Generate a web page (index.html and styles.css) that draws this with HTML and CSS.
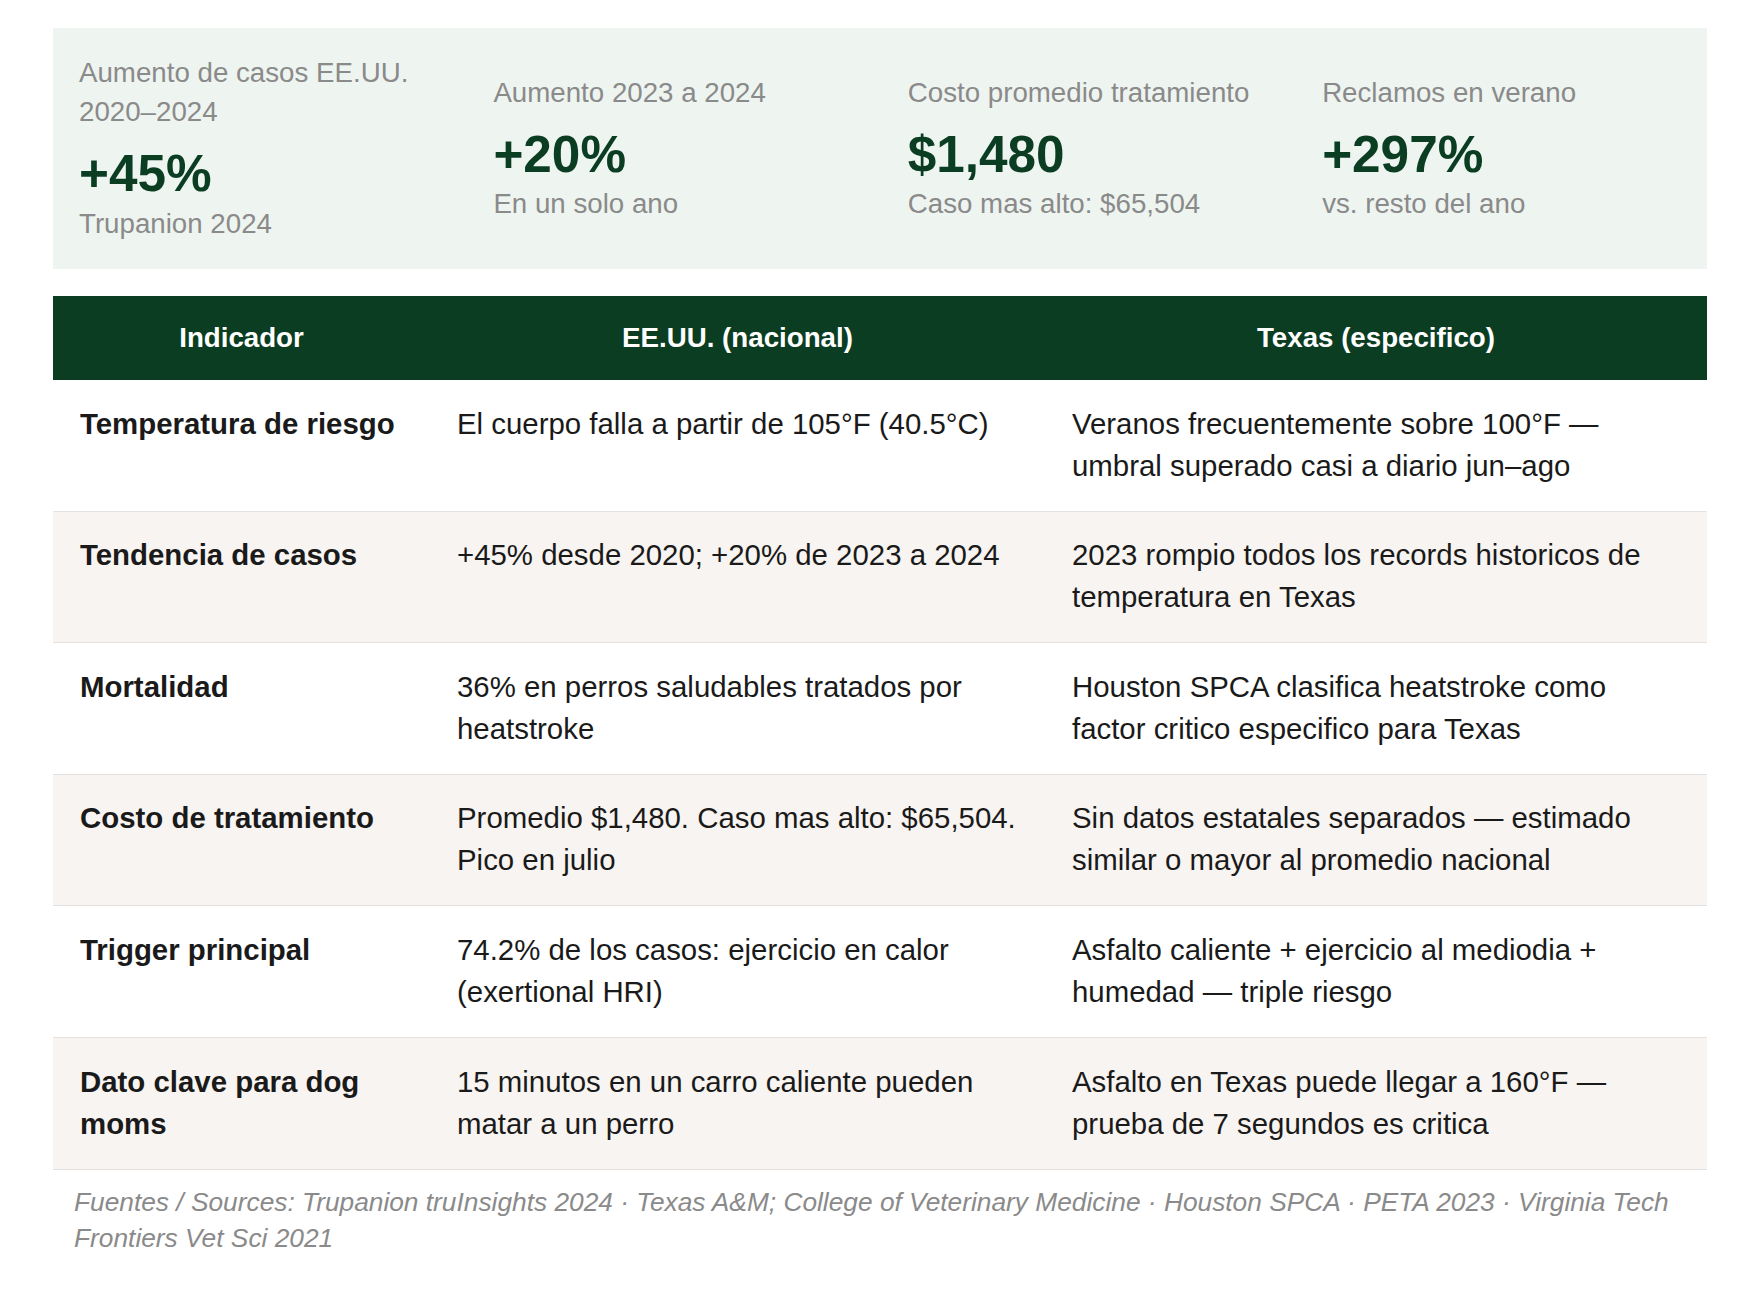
FILE: index.html
```html
<!DOCTYPE html>
<html lang="es">
<head>
<meta charset="utf-8">
<title>Heatstroke en perros</title>
<link rel="stylesheet" href="styles.css">
</head>
<body>
<div class="wrap">
  <section class="stats">
    <div class="stat">
      <div class="stat-label">Aumento de casos EE.UU. 2020–2024</div>
      <div class="stat-num">+45%</div>
      <div class="stat-sub">Trupanion 2024</div>
    </div>
    <div class="stat">
      <div class="stat-label">Aumento 2023 a 2024</div>
      <div class="stat-num">+20%</div>
      <div class="stat-sub">En un solo ano</div>
    </div>
    <div class="stat">
      <div class="stat-label">Costo promedio tratamiento</div>
      <div class="stat-num">$1,480</div>
      <div class="stat-sub">Caso mas alto: $65,504</div>
    </div>
    <div class="stat">
      <div class="stat-label">Reclamos en verano</div>
      <div class="stat-num">+297%</div>
      <div class="stat-sub">vs. resto del ano</div>
    </div>
  </section>

  <table class="data">
    <colgroup>
      <col class="c1">
      <col class="c2">
      <col class="c3">
    </colgroup>
    <thead>
      <tr>
        <th>Indicador</th>
        <th>EE.UU. (nacional)</th>
        <th>Texas (especifico)</th>
      </tr>
    </thead>
    <tbody>
      <tr>
        <td class="ind">Temperatura de riesgo</td>
        <td>El cuerpo falla a partir de 105°F (40.5°C)</td>
        <td>Veranos frecuentemente sobre 100°F — umbral superado casi a diario jun–ago</td>
      </tr>
      <tr class="alt">
        <td class="ind">Tendencia de casos</td>
        <td>+45% desde 2020; +20% de 2023 a 2024</td>
        <td>2023 rompio todos los records historicos de temperatura en Texas</td>
      </tr>
      <tr>
        <td class="ind">Mortalidad</td>
        <td>36% en perros saludables tratados por heatstroke</td>
        <td>Houston SPCA clasifica heatstroke como factor critico especifico para Texas</td>
      </tr>
      <tr class="alt">
        <td class="ind">Costo de tratamiento</td>
        <td>Promedio $1,480. Caso mas alto: $65,504. Pico en julio</td>
        <td>Sin datos estatales separados — estimado similar o mayor al promedio nacional</td>
      </tr>
      <tr>
        <td class="ind">Trigger principal</td>
        <td>74.2% de los casos: ejercicio en calor (exertional HRI)</td>
        <td>Asfalto caliente + ejercicio al mediodia + humedad — triple riesgo</td>
      </tr>
      <tr class="alt">
        <td class="ind">Dato clave para dog moms</td>
        <td>15 minutos en un carro caliente pueden matar a un perro</td>
        <td>Asfalto en Texas puede llegar a 160°F — prueba de 7 segundos es critica</td>
      </tr>
    </tbody>
  </table>

  <p class="sources">Fuentes / Sources: Trupanion truInsights 2024 · Texas A&amp;M; College of Veterinary Medicine · Houston SPCA · PETA 2023 · Virginia Tech Frontiers Vet Sci 2021</p>
</div>
</body>
</html>
```

FILE: styles.css
```css
* { box-sizing: border-box; }

html, body {
  margin: 0;
  padding: 0;
  background: #ffffff;
}

body {
  font-family: "Liberation Sans", Arial, Helvetica, sans-serif;
  color: #1a1a1a;
}

.wrap {
  width: 1654px;
  margin: 28px 0 0 53px;
}

/* ---------- stats panel ---------- */
.stats {
  display: grid;
  grid-template-columns: repeat(4, 1fr);
  column-gap: 55.5px;
  align-items: center;
  background: #eef4f0;
  padding: 23px 26px 24px 26px;
  height: 241px;
}

.stat-label,
.stat-sub {
  font-size: 27.7px;
  line-height: 39px;
  color: #8a8a8a;
}

.stat-label {
  margin-bottom: 15px;
}

.stat-num {
  font-size: 51.3px;
  line-height: 1.1;
  font-weight: 700;
  color: #0b3d22;
  margin-bottom: 1.5px;
}

/* ---------- table ---------- */
.data {
  width: 1654px;
  margin-top: 27px;
  border-collapse: collapse;
  table-layout: fixed;
}

.c1 { width: 377px; }
.c2 { width: 615px; }
.c3 { width: 662px; }

.data th {
  background: #0b3d22;
  color: #ffffff;
  font-size: 27.7px;
  line-height: 38px;
  font-weight: 700;
  text-align: center;
  padding: 23px 27px 23px 27px;
}

.data td {
  font-size: 29.4px;
  line-height: 42px;
  color: #1a1a1a;
  vertical-align: top;
  padding: 22.6px 27px 24px 27px;
  border-bottom: 1px solid #e4e1de;
}

.data td.ind {
  font-weight: 700;
}

.data tr.alt td {
  background: #f8f4f1;
}

/* ---------- sources ---------- */
.sources {
  margin: 14px 0 0 0;
  padding-left: 21px;
  font-size: 26.3px;
  line-height: 36px;
  font-style: italic;
  color: #8a8a8a;
}
```
